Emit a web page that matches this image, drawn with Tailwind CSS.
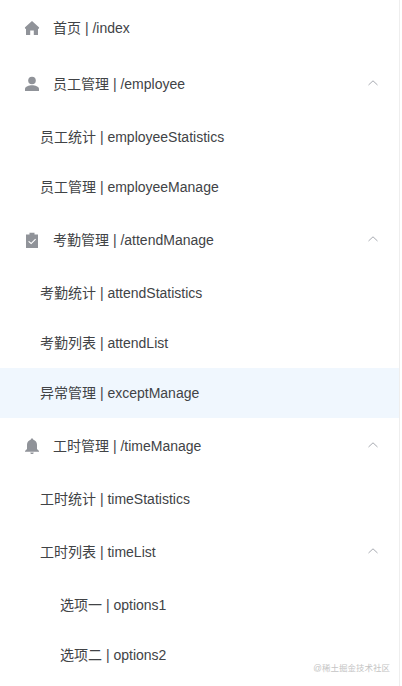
<!DOCTYPE html>
<html lang="zh">
<head>
  <meta charset="UTF-8" />
  <title>Menu</title>
  <script src="https://cdn.jsdelivr.net/npm/@tailwindcss/browser@4"></script>
</head>
<body class="bg-white text-[#414346] text-sm font-['Liberation_Sans','Noto_Sans_CJK_SC',sans-serif] h-[686px] overflow-hidden relative">
  <nav class="w-[400px] border-r border-[#eeeeee] h-[686px]">
    <div class="h-14 flex items-center pl-6 pr-5">
      <svg class="w-4 h-4 mr-[13px] fill-[#909399]" viewBox="0 0 16 16"><path d="M8 1 .8 7.500 1.500 9H2v6h4.200v-4.500h3.600V15H14V9h.5l.7-1.500z"/></svg>
      <span>首页 | /index</span>
    </div>

    <div class="h-14 flex items-center pl-6 pr-5">
      <svg class="w-4 h-4 mr-[13px] fill-[#909399]" viewBox="0 0 16 16"><circle cx="8" cy="4.500" r="3.800"/><path d="M1 15v-2c0-2.500 4-3.700 7-3.700s7 1.200 7 3.700v2z"/></svg>
      <span>员工管理 | /employee</span>
      <svg class="w-3 h-3 ml-auto -mt-[3px] fill-none stroke-[#a8abb2]" viewBox="0 0 12 12"><path d="M1.500 8 6 3.800 10.500 8"/></svg>
    </div>
    <div class="h-[50px] flex items-center pl-10">员工统计 | employeeStatistics</div>
    <div class="h-[50px] flex items-center pl-10">员工管理 | employeeManage</div>

    <div class="h-14 flex items-center pl-6 pr-5">
      <svg class="w-4 h-4 mr-[13px] fill-[#909399]" viewBox="0 0 16 16"><path fill-rule="evenodd" d="M2 2.500h3.500V.8h5v1.700H14V16H2zM7.200 12.300 12 7.500l-.8-.8-4 4-2.200-1.800-.8.8z"/></svg>
      <span>考勤管理 | /attendManage</span>
      <svg class="w-3 h-3 ml-auto -mt-[3px] fill-none stroke-[#a8abb2]" viewBox="0 0 12 12"><path d="M1.500 8 6 3.800 10.500 8"/></svg>
    </div>
    <div class="h-[50px] flex items-center pl-10">考勤统计 | attendStatistics</div>
    <div class="h-[50px] flex items-center pl-10">考勤列表 | attendList</div>
    <div class="h-[50px] flex items-center pl-10 bg-[#f0f7fe]">异常管理 | exceptManage</div>

    <div class="h-14 flex items-center pl-6 pr-5">
      <svg class="w-4 h-4 mr-[13px] fill-[#909399]" viewBox="0 0 16 16"><path d="M8 .5c.8 0 1.300.5 1.300 1.200C11.500 2.300 13 4.200 13 6.800V11l2 2v.8H1V13l2-2V6.800c0-2.600 1.500-4.500 3.700-5.100C6.700 1 7.200.5 8 .5zM6.300 14.500h3.400c0 1-.8 1.500-1.700 1.500s-1.700-.5-1.700-1.500z"/></svg>
      <span>工时管理 | /timeManage</span>
      <svg class="w-3 h-3 ml-auto -mt-[3px] fill-none stroke-[#a8abb2]" viewBox="0 0 12 12"><path d="M1.500 8 6 3.800 10.500 8"/></svg>
    </div>
    <div class="h-[50px] flex items-center pl-10">工时统计 | timeStatistics</div>
    <div class="h-14 flex items-center pl-10 pr-5">
      <span>工时列表 | timeList</span>
      <svg class="w-3 h-3 ml-auto -mt-[3px] fill-none stroke-[#a8abb2]" viewBox="0 0 12 12"><path d="M1.500 8 6 3.800 10.500 8"/></svg>
    </div>
    <div class="h-[50px] flex items-center pl-[60px]">选项一 | options1</div>
    <div class="h-[50px] flex items-center pl-[60px]">选项二 | options2</div>
  </nav>
  <div class="absolute right-[12px] top-[661px] text-[8.5px] leading-[14px] text-[#c4c4c4]">@稀土掘金技术社区</div>
</body>
</html>
